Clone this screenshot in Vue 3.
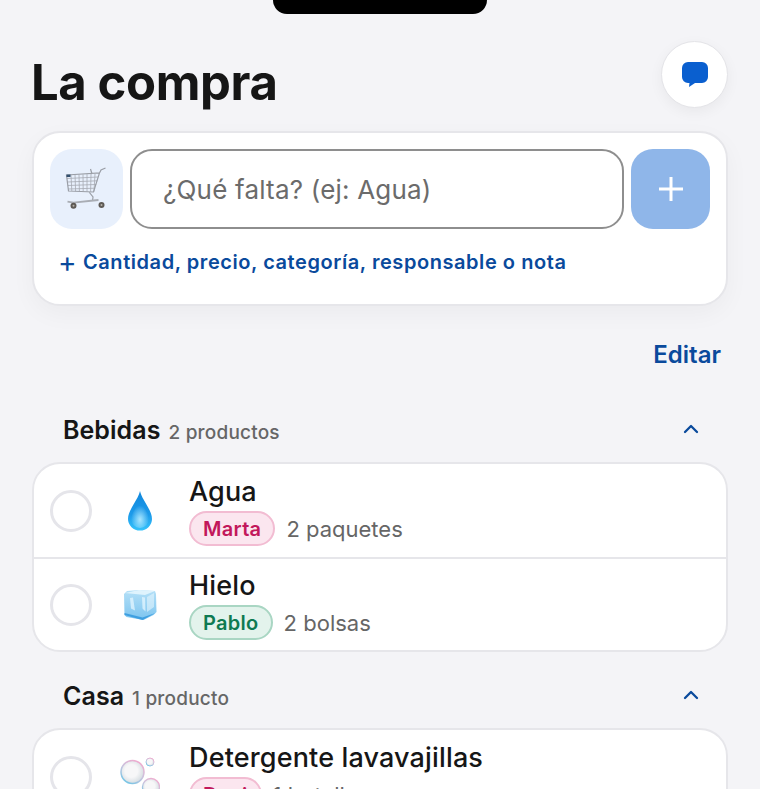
<script setup>
const groups = [
  {
    name: 'Bebidas',
    count: '2 productos',
    items: [
      { name: 'Agua', icon: 'drop', who: 'Marta', tone: 'pink', qty: '2 paquetes' },
      { name: 'Hielo', icon: 'ice', who: 'Pablo', tone: 'green', qty: '2 bolsas' },
    ],
  },
  {
    name: 'Casa',
    count: '1 producto',
    items: [
      { name: 'Detergente lavavajillas', icon: 'bubbles', who: 'Dani', tone: 'pink', qty: '1 botella' },
    ],
  },
]
</script>

<template>
  <div class="page">
    <div class="notch"></div>

    <header class="top">
      <h1>La compra</h1>
      <button class="chat">
        <svg width="26" height="25" viewBox="0 0 26 25">
          <path fill="#0a5fcf" d="M6 0h14a6 6 0 0 1 6 6v9a6 6 0 0 1-6 6H13l-6 4 .5-4H6a6 6 0 0 1-6-6V6a6 6 0 0 1 6-6z" />
        </svg>
      </button>
    </header>

    <section class="add">
      <div class="add-row">
        <div class="cart">
          <svg width="44" height="44" viewBox="0 0 44 44">
            <g fill="none" stroke="#a6aab2" stroke-width="0.8">
              <path d="M2 11.500l31-1.500M2.400 15l30-1.200M2.800 18.500l28.400-1M3.200 22l27-.8" />
              <path d="M6 8l.8 16M10 7.800l.6 16.400M14 7.600l.4 16.600M18 7.400l.2 17M22 7.200v17.400M26 7l-.4 17.600M30 6.800l-1 17.800" />
            </g>
            <path fill="none" stroke="#9a9ea6" stroke-width="1.200" d="M1.500 8L34.500 6 28.500 25 3.500 24zM25.500 2L27 7M34.500 6L36 3l4.500-2M24 25l4 5-.5 4" />
            <path fill="none" stroke="#a9adb4" stroke-width="1.800" d="M2.500 34.700l6 1 20-2.200 5-.5" />
            <rect x="1.500" y="7.500" width="4" height="2.500" fill="#33506e" />
            <circle cx="8.500" cy="38.700" r="3" fill="#5e5a55" />
            <circle cx="8.500" cy="38.700" r="1" fill="#b5b1aa" />
            <circle cx="36.500" cy="38" r="3" fill="#5e5a55" />
            <circle cx="36.500" cy="38" r="1" fill="#b5b1aa" />
          </svg>
        </div>
        <div class="field">¿Qué falta? (ej: Agua)</div>
        <button class="plus">
          <svg width="26" height="26" viewBox="0 0 26 26">
            <path stroke="#fff" stroke-width="3" d="M13 1v24M1 13h24" />
          </svg>
        </button>
      </div>
      <div class="more"><span class="more-plus">+</span>Cantidad, precio, categoría, responsable o nota</div>
    </section>

    <div class="edit">Editar</div>

    <div class="groups">
      <section v-for="g in groups" :key="g.name" class="group">
        <div class="group-head">
          <span class="group-name">{{ g.name }}</span>
          <span class="group-count">{{ g.count }}</span>
          <svg class="chev" width="16" height="10" viewBox="0 0 16 10">
            <path fill="none" stroke="#0a4a9c" stroke-width="2.300" stroke-linecap="round" stroke-linejoin="round" d="M2 8l6-6 6 6" />
          </svg>
        </div>
        <div class="list">
          <div v-for="it in g.items" :key="it.name" class="row">
            <span class="check"></span>
            <span class="emoji">
              <svg v-if="it.icon === 'drop'" width="26" height="40" viewBox="0 0 26 40">
                <defs>
                  <linearGradient id="dropFill" x1="0" y1="0" x2="0" y2="1">
                    <stop offset="0" stop-color="#1187dc" />
                    <stop offset="0.6" stop-color="#1d9bea" />
                    <stop offset="1" stop-color="#35c3fb" />
                  </linearGradient>
                  <radialGradient id="dropGlow" cx="0.5" cy="0.7" r="0.5">
                    <stop offset="0" stop-color="#a9e6ff" />
                    <stop offset="1" stop-color="#a9e6ff" stop-opacity="0" />
                  </radialGradient>
                </defs>
                <path fill="url(#dropFill)" d="M13 0C14.500 8 25 19 25 28a12 11.500 0 0 1-24 0C1 19 11.500 8 13 0z" />
                <path fill="url(#dropGlow)" d="M13 9c2 6 9 13 9 19a9 9 0 0 1-18 0c0-6 7-13 9-19z" />
              </svg>
              <svg v-else-if="it.icon === 'ice'" width="34" height="32" viewBox="0 0 34 32">
                <defs>
                  <linearGradient id="iceFill" x1="0" y1="0" x2="0" y2="1">
                    <stop offset="0" stop-color="#b5e0f7" />
                    <stop offset="1" stop-color="#7cc4ef" />
                  </linearGradient>
                </defs>
                <path fill="url(#iceFill)" d="M1 5l3-3 12-1 16 1 1 3 .5 18-3 3-10 5-17-3-2-2z" />
                <path fill="#dff3fd" d="M2 4l14-3 16 1-10 4z" />
                <path fill="#eaf8ff" opacity=".7" d="M7 9l3-.5 2 13-4-2zM19 8l3 .5.500 14-3-3z" />
                <path fill="#e4f5fe" opacity=".6" d="M24 8l7-4v14l-7 5z" />
                <path fill="#3f9fe0" d="M1.500 26l18 5 13-7-13 4.500L1.500 24z" />
              </svg>
              <svg v-else width="40" height="48" viewBox="0 0 40 48">
                <defs>
                  <radialGradient id="bubbleFill" cx="0.45" cy="0.45" r="0.55">
                    <stop offset="0.5" stop-color="#f7f7f8" />
                    <stop offset="1" stop-color="#d6dde2" />
                  </radialGradient>
                  <linearGradient id="bubbleRim" x1="0.8" y1="0" x2="0.2" y2="1">
                    <stop offset="0" stop-color="#f3a9cd" />
                    <stop offset="0.5" stop-color="#c9c3de" />
                    <stop offset="1" stop-color="#6fc6e6" />
                  </linearGradient>
                </defs>
                <circle cx="12.500" cy="19" r="11.500" fill="url(#bubbleFill)" stroke="url(#bubbleRim)" stroke-width="1.500" />
                <circle cx="30" cy="9" r="4" fill="url(#bubbleFill)" stroke="url(#bubbleRim)" stroke-width="1" />
                <circle cx="31" cy="34" r="8.500" fill="url(#bubbleFill)" stroke="url(#bubbleRim)" stroke-width="1.300" />
              </svg>
            </span>
            <div class="info">
              <div class="name">{{ it.name }}</div>
              <div class="meta">
                <span class="tag" :class="it.tone">{{ it.who }}</span>
                <span class="qty">{{ it.qty }}</span>
              </div>
            </div>
          </div>
        </div>
      </section>
    </div>
  </div>
</template>

<style>
html, body {
  margin: 0;
  height: 789px;
  overflow: hidden;
  background: #f4f4f7;
}
</style>

<style scoped>
.page {
  position: relative;
  height: 789px;
  overflow: hidden;
  box-sizing: border-box;
  padding: 41px 32px 0;
  background: #f4f4f7;
  color: #161616;
  font-family: Inter, "Liberation Sans", sans-serif;
}

.notch {
  position: absolute;
  left: 273px;
  top: 0;
  width: 214px;
  height: 14px;
  background: #000;
  border-radius: 0 0 20px 20px;
}

.top {
  display: flex;
  justify-content: space-between;
  height: 67px;
}

h1 {
  margin: 16px 0 0 -1px;
  font-size: 49px;
  line-height: 51px;
  font-weight: 700;
  letter-spacing: -0.38px;
}

.chat {
  display: flex;
  align-items: center;
  justify-content: center;
  width: 67px;
  height: 67px;
  padding: 0;
  background: #fff;
  border: 1px solid #e4e4e8;
  border-radius: 50%;
  box-shadow: 0 4px 14px rgba(0, 0, 0, 0.05);
}

.add {
  box-sizing: border-box;
  height: 175px;
  margin-top: 23px;
  padding: 16px 16px 0;
  background: #fff;
  border: 2px solid #e6e6ea;
  border-radius: 28px;
  box-shadow: 0 8px 24px rgba(0, 0, 0, 0.04);
}

.add-row {
  display: flex;
  gap: 7px;
  height: 80px;
}

.cart {
  display: flex;
  align-items: center;
  justify-content: center;
  flex: 0 0 73px;
  background: #e8f0fc;
  border-radius: 22px;
}

.field {
  flex: 1;
  display: flex;
  align-items: center;
  padding-left: 31px;
  border: 2px solid #8e8e8e;
  border-radius: 22px;
  color: #6b6b6b;
  font-size: 26px;
  letter-spacing: 0.2px;
}

.plus {
  display: flex;
  align-items: center;
  justify-content: center;
  flex: 0 0 79px;
  padding: 0;
  background: #8fb6e9;
  border: 0;
  border-radius: 22px;
}

.more {
  display: flex;
  align-items: center;
  margin-top: 21px;
  padding-left: 8px;
  color: #0a4a9c;
  font-size: 20px;
  font-weight: 600;
  letter-spacing: 0.56px;
}

.more-plus {
  width: 25px;
  font-size: 28px;
  line-height: 24px;
  font-weight: 400;
}

.edit {
  margin-top: 34px;
  padding-right: 7px;
  text-align: right;
  color: #0a4a9c;
  font-size: 24px;
  font-weight: 600;
}

.groups {
  margin-top: 45px;
}

.group + .group {
  margin-top: 28px;
}

.group-head {
  box-sizing: border-box;
  display: flex;
  align-items: baseline;
  height: 48px;
  padding: 1px 29px 0 31px;
}

.group-name {
  font-size: 25px;
  font-weight: 600;
  letter-spacing: 0.05px;
}

.group-count {
  margin-left: 8px;
  color: #666;
  font-size: 19px;
  font-weight: 500;
  letter-spacing: 0.2px;
}

.chev {
  align-self: flex-start;
  margin: 9px 0 0 auto;
}

.list {
  background: #fff;
  border: 2px solid #e6e6ea;
  border-radius: 28px;
}

.row {
  box-sizing: border-box;
  display: flex;
  align-items: center;
  height: 93px;
  padding-left: 16px;
}

.row + .row {
  border-top: 2px solid #e6e6ea;
}

.check {
  box-sizing: border-box;
  flex: 0 0 42px;
  height: 42px;
  border: 3.5px solid #e5e5ea;
  border-radius: 50%;
}

.emoji {
  display: flex;
  justify-content: center;
  flex: 0 0 56px;
  margin: 0 21px 0 20px;
}

.name {
  font-size: 27px;
  font-weight: 500;
  letter-spacing: 0.15px;
}

.meta {
  display: flex;
  align-items: center;
  gap: 11px;
  margin-top: 3px;
}

.tag {
  box-sizing: border-box;
  display: flex;
  align-items: center;
  height: 35px;
  padding: 0 12px;
  border: 2px solid;
  border-radius: 18px;
  font-size: 20px;
  font-weight: 600;
  letter-spacing: 0.3px;
}

.tag.pink {
  color: #c2185b;
  background: #fbe6ef;
  border-color: #f2bcd2;
}

.tag.green {
  color: #0f7a52;
  background: #e3f3ec;
  border-color: #a9d6c3;
}

.qty {
  color: #666;
  font-size: 22px;
}
</style>
